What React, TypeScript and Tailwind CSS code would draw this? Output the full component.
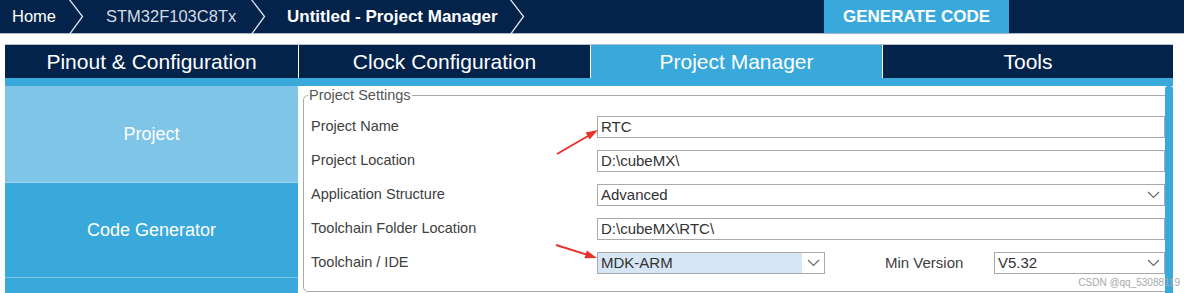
import React from "react";

function Chevron() {
  return (
    <svg width="16" height="34" viewBox="0 0 16 34" className="shrink-0">
      <polyline points="1,-1 14.5,16.5 1,35" fill="none" stroke="#dde4ec" strokeWidth="1.3" />
    </svg>
  );
}

function Caret() {
  return (
    <svg width="13" height="8" viewBox="0 0 13 8" className="shrink-0">
      <polyline points="1,1 6.5,6.5 12,1" fill="none" stroke="#666" strokeWidth="1.1" />
    </svg>
  );
}

function TextBox({ value }: { value: string }) {
  return (
    <div className="w-[568px] h-[22px] border border-[#a9a9a9] bg-white flex items-center pl-[3px] text-[15px] text-[#333]">
      {value}
    </div>
  );
}

function Select({ value, width, hl }: { value: string; width: string; hl?: boolean }) {
  return (
    <div className={`${width} h-[22px] border border-[#a9a9a9] bg-white flex items-stretch text-[15px] text-[#333]`}>
      <div className={`flex-1 flex items-center pl-[3px] ${hl ? "bg-[#d6e6f4]" : ""}`}>{value}</div>
      <div className="w-[22px] flex items-center justify-center">
        <Caret />
      </div>
    </div>
  );
}

function Row({ label, children }: { label: string; children: React.ReactNode }) {
  return (
    <div className="h-[34px] flex items-center">
      <div className="w-[286px] text-[14.5px] text-[#404040]">{label}</div>
      {children}
    </div>
  );
}

export default function App() {
  return (
    <div className="relative w-[1184px] h-[293px] overflow-hidden bg-white font-['Liberation_Sans',Arial,sans-serif]">
      {/* top bar */}
      <div className="h-[34px] bg-[#03234b] border-b border-[#a9b4c2] flex items-stretch">
        <div className="w-[68px] pl-[12px] flex items-center text-[16.5px] text-white">Home</div>
        <Chevron />
        <div className="w-[166px] pl-[22px] flex items-center text-[16.5px] text-[#d3dbe4]">STM32F103C8Tx</div>
        <Chevron />
        <div className="w-[243px] pl-[21px] flex items-center text-[17px] font-bold text-white">Untitled - Project Manager</div>
        <Chevron />
        <div className="flex-1" />
        <div className="w-[185px] h-[33px] bg-[#39a9db] flex items-center justify-center text-[17px] font-bold text-white">
          GENERATE CODE
        </div>
        <div className="w-[175px]" />
      </div>

      {/* tabs */}
      <div className="mt-[10px] ml-[5px] w-[1168px] flex border-t border-[#b4bfcc] text-[21px] text-white">
        <div className="w-[294px] h-[33px] bg-[#03234b] border-r border-white flex items-center justify-center">Pinout &amp; Configuration</div>
        <div className="w-[292px] h-[33px] bg-[#03234b] border-r border-white flex items-center justify-center">Clock Configuration</div>
        <div className="w-[292px] h-[33px] bg-[#39a9db] border-r border-white flex items-center justify-center">Project Manager</div>
        <div className="flex-1 h-[33px] bg-[#03234b] flex items-center justify-center">Tools</div>
      </div>
      <div className="ml-[5px] w-[1168px] h-[8px] bg-[#39a9db]" />

      {/* body */}
      <div className="ml-[5px] w-[1168px] h-[207px] flex">
        <div className="w-[293px] flex flex-col bg-[#39a9db] text-[18px] text-white">
          <div className="h-[97px] bg-[#7ec5e8] border-b border-[#a6d7f0] flex items-center justify-center">Project</div>
          <div className="h-[95px] border-b border-[#7ec5e8] flex items-center justify-center">Code Generator</div>
          <div className="flex-1" />
        </div>
        <div className="relative flex-1 overflow-hidden bg-white pl-[5px] pt-[1px]">
          <fieldset className="w-[880px] border border-[#a8a8a8] rounded-[5px] pl-[7px] pb-[11px]">
            <legend className="-ml-[3px] px-[1px] text-[14.5px] leading-[17px] text-[#555]">Project Settings</legend>
            <div className="pt-[6px]">
              <Row label="Project Name">
                <TextBox value="RTC" />
              </Row>
              <Row label="Project Location">
                <TextBox value="D:\cubeMX\" />
              </Row>
              <Row label="Application Structure">
                <Select value="Advanced" width="w-[568px]" />
              </Row>
              <Row label="Toolchain Folder Location">
                <TextBox value="D:\cubeMX\RTC\" />
              </Row>
              <Row label="Toolchain / IDE">
                <Select value="MDK-ARM" width="w-[228px]" hl />
                <div className="ml-[60px] w-[109px] text-[15px] text-[#404040]">Min Version</div>
                <Select value="V5.32" width="w-[171px]" />
              </Row>
            </div>
          </fieldset>
          <div className="absolute right-0 top-0 bottom-0 w-[8px] bg-[#39a9db] rounded-t-[3px]" />
        </div>
      </div>

      {/* annotations */}
      <svg className="absolute left-0 top-0 pointer-events-none" width="1184" height="293">
        <line x1="557" y1="154" x2="588" y2="136" stroke="#e8312a" strokeWidth="2" />
        <polygon points="598,130 589.6,139.5 585.6,132.5" fill="#e8312a" />
        <line x1="556" y1="245" x2="586" y2="254.4" stroke="#e8312a" strokeWidth="2" />
        <polygon points="597,258 584.4,258.2 586.8,250.6" fill="#e8312a" />
      </svg>
      <div className="absolute right-[4px] bottom-[4px] text-[10px] leading-[12px] text-[#a8a8a8]">CSDN @qq_53088119</div>
    </div>
  );
}
